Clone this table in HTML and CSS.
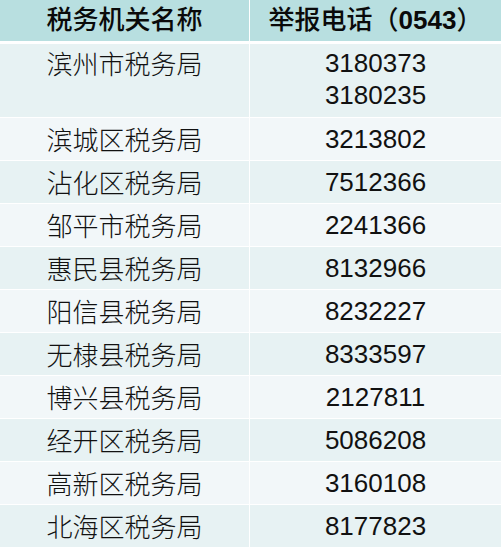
FILE: index.html
```html
<!DOCTYPE html>
<html lang="zh-CN">
<head>
<meta charset="utf-8">
<title>税务机关举报电话</title>
<link rel="stylesheet" href="styles.css">
</head>
<body>
<table class="tax-table">
  <colgroup>
    <col class="col-name">
    <col class="col-phone">
  </colgroup>
  <thead>
    <tr>
      <th class="cell-name">税务机关名称</th>
      <th class="cell-phone">举报电话（<b class="code">0543</b>）</th>
    </tr>
  </thead>
  <tbody>
    <tr class="row-odd row-tall">
      <td class="cell-name">滨州市税务局</td>
      <td class="cell-phone num">3180373<br>3180235</td>
    </tr>
    <tr class="row-even">
      <td class="cell-name">滨城区税务局</td>
      <td class="cell-phone num">3213802</td>
    </tr>
    <tr class="row-odd">
      <td class="cell-name">沾化区税务局</td>
      <td class="cell-phone num">7512366</td>
    </tr>
    <tr class="row-even">
      <td class="cell-name">邹平市税务局</td>
      <td class="cell-phone num">2241366</td>
    </tr>
    <tr class="row-odd">
      <td class="cell-name">惠民县税务局</td>
      <td class="cell-phone num">8132966</td>
    </tr>
    <tr class="row-even">
      <td class="cell-name">阳信县税务局</td>
      <td class="cell-phone num">8232227</td>
    </tr>
    <tr class="row-odd">
      <td class="cell-name">无棣县税务局</td>
      <td class="cell-phone num">8333597</td>
    </tr>
    <tr class="row-even">
      <td class="cell-name">博兴县税务局</td>
      <td class="cell-phone num">2127811</td>
    </tr>
    <tr class="row-odd">
      <td class="cell-name">经开区税务局</td>
      <td class="cell-phone num">5086208</td>
    </tr>
    <tr class="row-even">
      <td class="cell-name">高新区税务局</td>
      <td class="cell-phone num">3160108</td>
    </tr>
    <tr class="row-odd">
      <td class="cell-name">北海区税务局</td>
      <td class="cell-phone num">8177823</td>
    </tr>
  </tbody>
</table>
</body>
</html>
```
FILE: styles.css
```css
html, body {
  margin: 0;
  padding: 0;
  background: #ffffff;
}

body {
  font-family: "Liberation Sans", "Noto Sans CJK SC", sans-serif;
  color: #111111;
}

.tax-table {
  width: 501px;
  table-layout: fixed;
  border-collapse: separate;
  border-spacing: 0;
}

.col-name { width: 250px; }
.col-phone { width: 251px; }

.tax-table th,
.tax-table td {
  padding: 0;
  text-align: center;
  font-size: 26px;
  white-space: nowrap;
}

.tax-table th {
  background: #b8dfe0;
  height: 41px;
  line-height: 41px;
  font-weight: 500;
  color: #0a0a0a;
  border-bottom: 3px solid #ffffff;
  font-family: "Liberation Sans", "Noto Sans CJK SC", sans-serif;
}

.tax-table th .code {
  font-weight: 700;
}

.cell-name {
  border-right: 1px solid #ffffff;
}

.tax-table td {
  line-height: 32px;
  padding: 5px 0;
  border-bottom: 1px solid #ffffff;
  vertical-align: middle;
}

.tax-table td.cell-name {
  font-family: "Noto Sans CJK SC", sans-serif;
  font-weight: 300;
}

.tax-table td.num {
  font-family: "Liberation Sans", sans-serif;
}

.row-tall td {
  vertical-align: top;
  padding: 3px 0 6px;
}

.row-odd td { background: #e7f2f3; }
.row-even td { background: #f2f7f9; }
```
